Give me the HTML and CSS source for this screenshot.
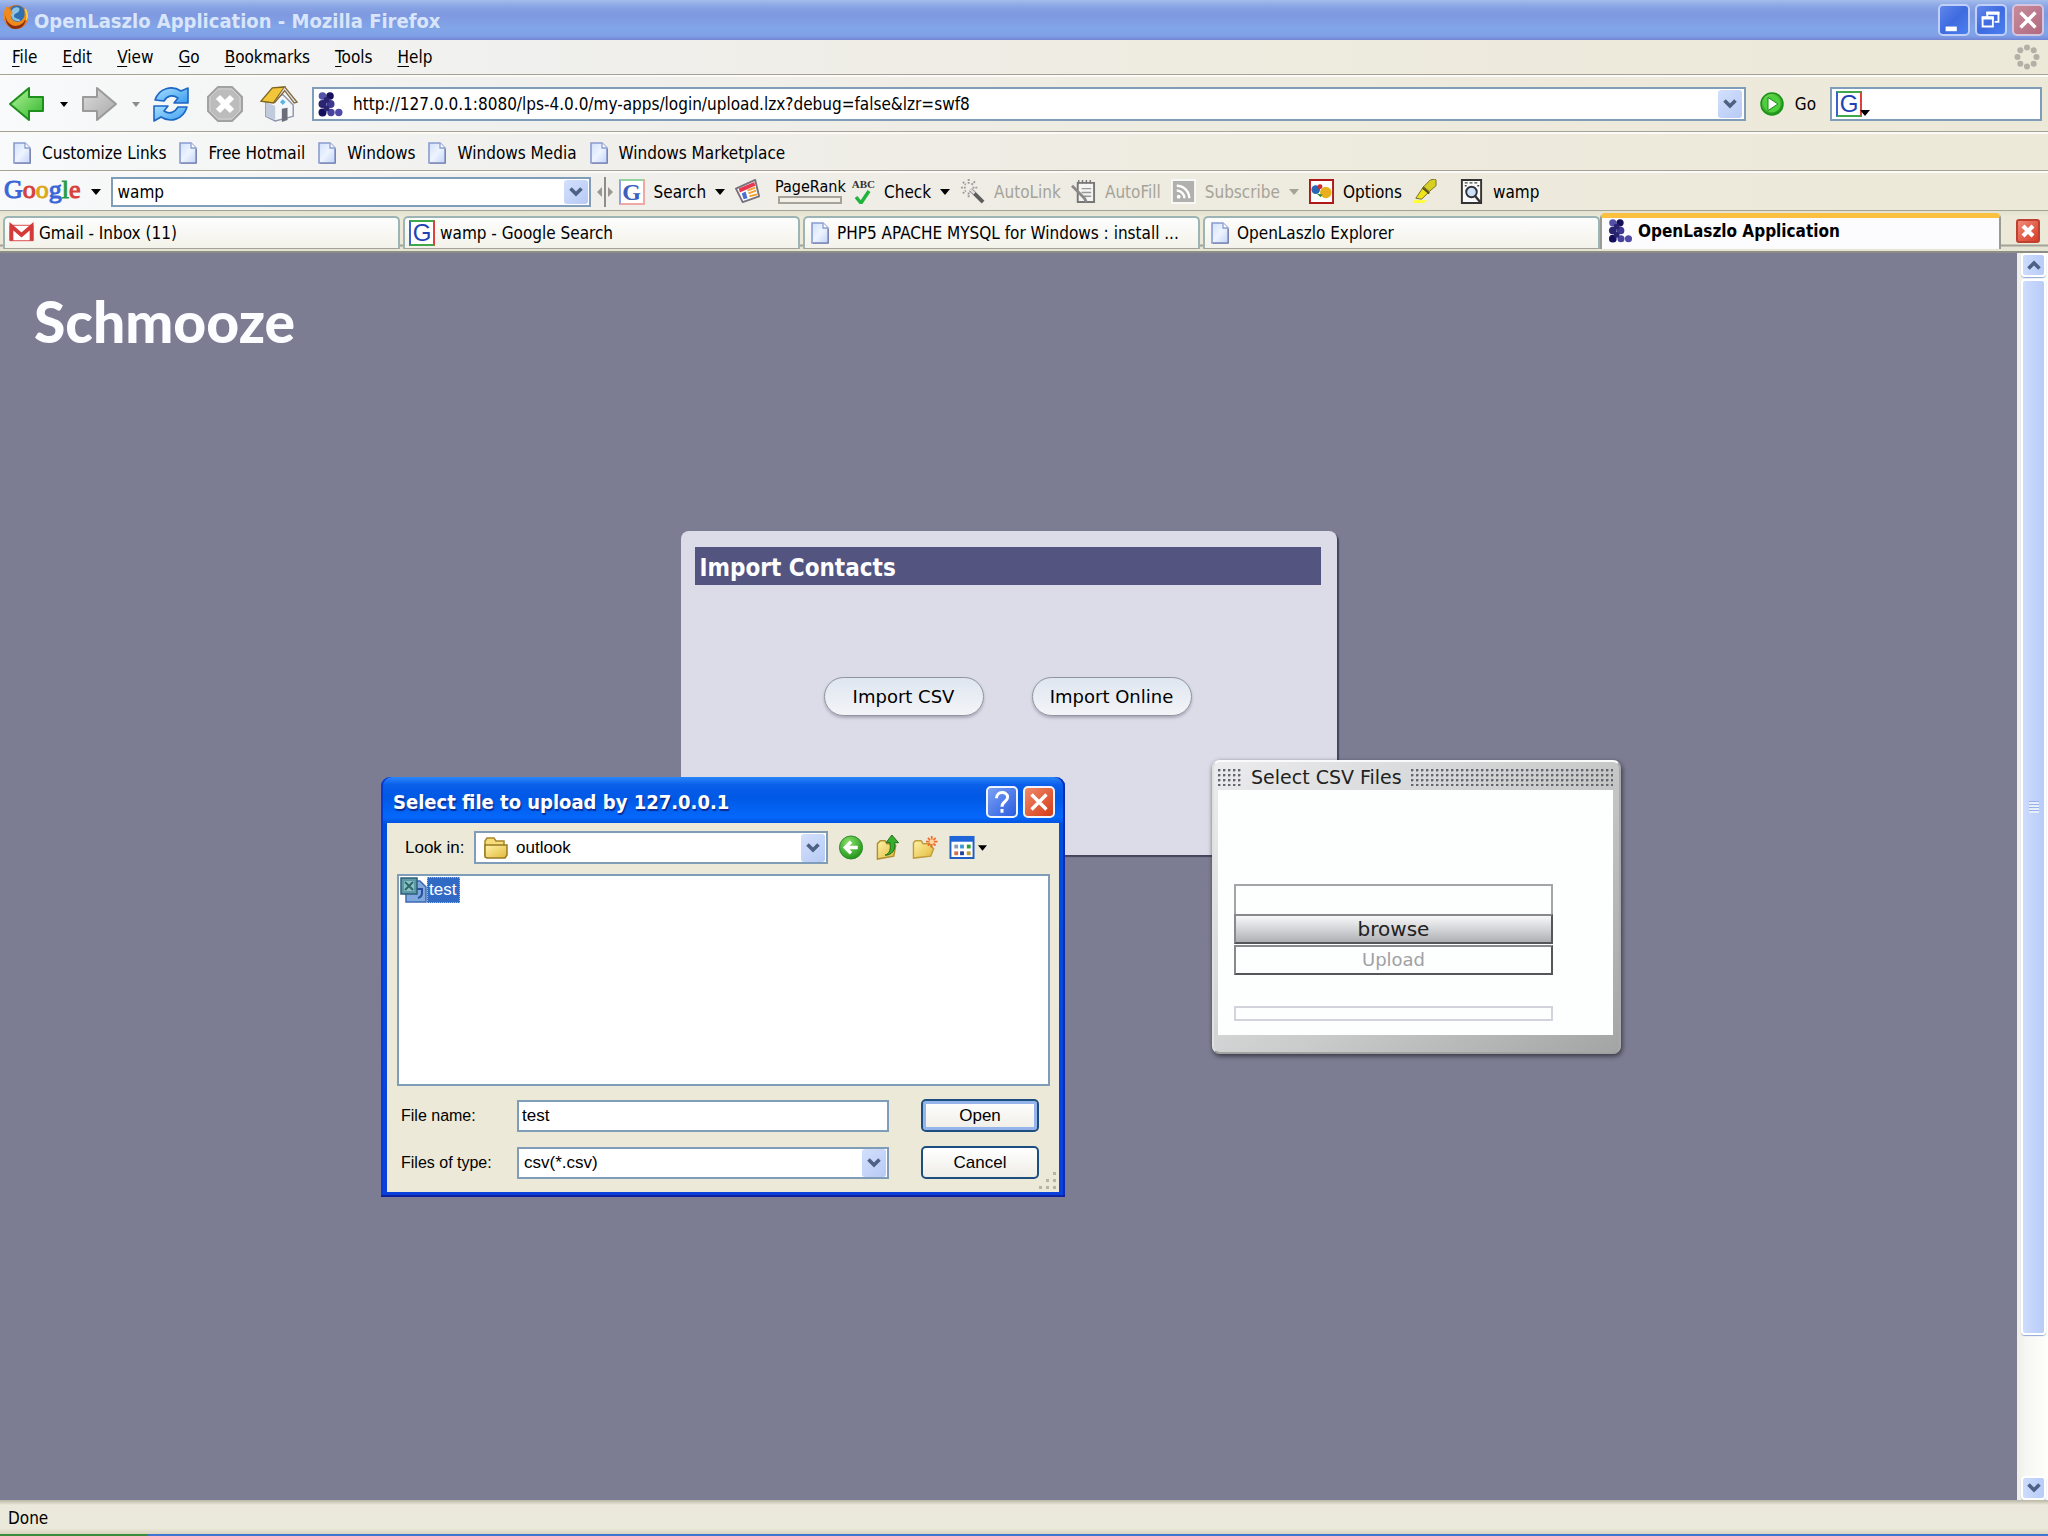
FILE: index.html
```html
<!DOCTYPE html>
<html lang="en">
<head>
<meta charset="utf-8">
<title>OpenLaszlo Application - Mozilla Firefox</title>
<link rel="stylesheet" href="styles.css">
</head>
<body>
<svg class="defs" aria-hidden="true">
  <defs>
    <linearGradient id="green" x1="0" y1="0" x2="1" y2="1"><stop offset="0" stop-color="#b6f59c"/><stop offset="1" stop-color="#2fb52a"/></linearGradient>
    <linearGradient id="grey" x1="0" y1="0" x2="1" y2="1"><stop offset="0" stop-color="#dcdcdc"/><stop offset="1" stop-color="#a8a8a8"/></linearGradient>
    <linearGradient id="sky" x1="0" y1="0" x2="1" y2="1"><stop offset="0" stop-color="#a8e0ff"/><stop offset="1" stop-color="#3b9bf0"/></linearGradient>
    <linearGradient id="paper" x1="0" y1="0" x2="1" y2="1"><stop offset="0" stop-color="#cfe0fb"/><stop offset=".5" stop-color="#eef4ff"/><stop offset="1" stop-color="#c4d4f6"/></linearGradient>
    <linearGradient id="gold" x1="0" y1="0" x2="1" y2="1"><stop offset="0" stop-color="#fff3a8"/><stop offset="1" stop-color="#e2b93a"/></linearGradient>
    <radialGradient id="ball" cx=".4" cy=".3" r=".8"><stop offset="0" stop-color="#8be36c"/><stop offset="1" stop-color="#128a10"/></radialGradient>
  </defs>
  <symbol id="i-page" viewBox="0 0 18 22"><path d="M1 1h11l5 5v15H1z" fill="url(#paper)" stroke="#8a9cd0" stroke-width="1.6"/><path d="M12 1v5h5" fill="#fff" stroke="#8a9cd0" stroke-width="1.3"/><path d="M2 21.2h15.400V7" fill="none" stroke="#7780aa"/></symbol>
  <symbol id="i-laszlo" viewBox="0 0 25 25"><g fill="#2a2470"><circle cx="4.500" cy="4" r="3.800" fill="#5450a8"/><circle cx="12" cy="4" r="3.800" fill="#17105e"/><circle cx="4.500" cy="12" r="4"/><circle cx="12.500" cy="12" r="4" fill="#3c3790"/><circle cx="4.500" cy="20.500" r="4" fill="#150e5a"/><circle cx="13" cy="20.500" r="3.700" fill="#4742a0"/><circle cx="20.800" cy="20.500" r="3.700" fill="#4f4aa6"/><circle cx="8.500" cy="8" r="3"/><circle cx="8.500" cy="16.500" r="3"/></g></symbol>
  <symbol id="i-chev" viewBox="0 0 14 10"><path d="M1.500 1.500L7 7l5.500-5.500" fill="none" stroke="#4d6185" stroke-width="3.600"/></symbol>
  <symbol id="i-caret" viewBox="0 0 10 6"><path d="M0 0h10L5 6z" fill="currentColor"/></symbol>
</svg>

<header class="chrome">
  <div class="titlebar">
    <svg class="fox" viewBox="0 0 26 26"><circle cx="13" cy="13" r="12" fill="#e0701a"/><circle cx="14" cy="10" r="8.500" fill="#2f6fb0"/><path d="M11 4c3-2 7 0 5 3s-5 2-5 5 5 2 6 4-6 2-8-2-1-8 2-10z" fill="#8cc4e6"/><path d="M1 8C2 4 3 3 5 2c0 2 1 3 3 3-1 2 1 3 2 4-2 1-3 3-1 6s7 4 10 1 3-6 2-10c3 3 4 8 2 12-3 6-11 8-16 5S0 14 1 8z" fill="#ee8a1e"/><path d="M3 10c-1 6 3 11 9 12 6 0 10-4 11-9 0 8-5 12-11 12S1 18 3 10z" fill="#8c2c10"/><path d="M22 5c2 3 3 7 1 11" stroke="#ffd23c" stroke-width="1.800" fill="none"/></svg>
    <span class="titletext">OpenLaszlo Application - Mozilla Firefox</span>
    <div class="winbtns">
      <button class="winbtn" aria-label="Minimize"><svg viewBox="0 0 30 30"><path d="M6 22h12v5H6z" fill="#fff"/></svg></button>
      <button class="winbtn" aria-label="Restore"><svg viewBox="0 0 30 30"><path d="M11 11V7h12v10h-4M6 12h11v10H6z" fill="none" stroke="#fff" stroke-width="2"/><path d="M10 8h14M5 13h13" stroke="#fff" stroke-width="3"/></svg></button>
      <button class="winbtn winclose" aria-label="Close"><svg viewBox="0 0 30 30"><path d="M7 7l16 16M23 7L7 23" stroke="#fff" stroke-width="3.600"/></svg></button>
    </div>
  </div>

  <nav class="menubar">
    <a href="#"><u>F</u>ile</a><a href="#"><u>E</u>dit</a><a href="#"><u>V</u>iew</a><a href="#"><u>G</u>o</a><a href="#"><u>B</u>ookmarks</a><a href="#"><u>T</u>ools</a><a href="#"><u>H</u>elp</a>
    <svg class="throb" viewBox="0 0 26 26" fill="#b3b0a7"><circle cx="13" cy="3.500" r="3"/><circle cx="19.700" cy="6.300" r="3"/><circle cx="22.500" cy="13" r="3"/><circle cx="19.700" cy="19.700" r="3"/><circle cx="13" cy="22.500" r="3"/><circle cx="6.300" cy="19.700" r="3"/><circle cx="3.500" cy="13" r="3"/><circle cx="6.300" cy="6.300" r="3"/></svg>
  </nav>

  <div class="navbar">
    <button class="nav" aria-label="Back"><svg viewBox="0 0 38 36"><path d="M2 18L21 2v9h14v14H21v9z" fill="url(#green)" stroke="#1f8f1c" stroke-width="2" stroke-linejoin="round"/></svg></button>
    <svg class="caret"><use href="#i-caret"/></svg>
    <button class="nav" aria-label="Forward"><svg viewBox="0 0 38 36"><path d="M36 18L17 2v9H3v14h14v9z" fill="url(#grey)" stroke="#9a9a9a" stroke-width="2" stroke-linejoin="round"/></svg></button>
    <svg class="caret dim"><use href="#i-caret"/></svg>
    <button class="nav" aria-label="Reload"><svg viewBox="0 0 38 36"><g fill="url(#sky)" stroke="#1c66c4" stroke-width="1.600" stroke-linejoin="round"><path d="M3 14C7 2 20-1 29 5l7-3v15H22l4-5c-6-4-11-2-14 3z"/><path d="M35 21C31 34 18 37 9 31l-7 4V20h14l-4 5c6 4 11 1 14-4z"/></g></svg></button>
    <button class="nav" aria-label="Stop"><svg viewBox="0 0 38 36"><path d="M12 1h14l10 10v14L26 35H12L2 25V11z" fill="#bcbcbc" stroke="#a2a2a2" stroke-width="2"/><path d="M12 3h14l8 8v14l-8 8H12l-8-8V11z" fill="none" stroke="#d2d2d2"/><path d="M12 11l14 14M26 11L12 25" stroke="#fff" stroke-width="6"/></svg></button>
    <button class="nav" aria-label="Home"><svg viewBox="0 0 40 38"><path d="M6 17L24 9l11 11v12l-19 5-10-5z" fill="#f4f6fa" stroke="#8a93a8" stroke-width="1.500"/><path d="M6 17l10 4v15L6 32z" fill="#c2cbdc"/><path d="M23 24l6-1v13l-6 2z" fill="#6b6d78"/><path d="M24 14l3 3-3 3-3-3z" fill="#56b6e8"/><path d="M1 16L13 2l13-1-12 17z" fill="#f3c63a" stroke="#7d651c" stroke-width="1.500"/><path d="M26 1l13 16-3 1L26 5l-11 13" fill="#d8dce6" stroke="#80643a" stroke-width="1.300"/></svg></button>
    <div class="field url">
      <svg class="ic"><use href="#i-laszlo"/></svg>
      <input type="text" aria-label="Address" value="http://127.0.0.1:8080/lps-4.0.0/my-apps/login/upload.lzx?debug=false&amp;lzr=swf8">
      <button class="drop" aria-label="Show history"><svg><use href="#i-chev"/></svg></button>
    </div>
    <button class="go"><svg viewBox="0 0 24 24"><circle cx="12" cy="12" r="11" fill="url(#ball)" stroke="#169414" stroke-width="1.500"/><circle cx="12" cy="12" r="8.500" fill="#4ecf3c"/><path d="M8 5.500L18 12 8 18.500z" fill="#fff" stroke="#1a8a18"/></svg>Go</button>
    <div class="field find">
      <span class="g">G</span><svg class="caret"><use href="#i-caret"/></svg>
      <input type="text" aria-label="Search the web">
    </div>
  </div>

  <nav class="bookmarks">
    <a href="#"><svg><use href="#i-page"/></svg>Customize Links</a>
    <a href="#"><svg><use href="#i-page"/></svg>Free Hotmail</a>
    <a href="#"><svg><use href="#i-page"/></svg>Windows</a>
    <a href="#"><svg><use href="#i-page"/></svg>Windows Media</a>
    <a href="#"><svg><use href="#i-page"/></svg>Windows Marketplace</a>
  </nav>

  <div class="gbar">
    <button class="glogo"><span class="gb">G</span><span class="gr">o</span><span class="gy">o</span><span class="gb">g</span><span class="gg">l</span><span class="gr">e</span></button>
    <svg class="caret"><use href="#i-caret"/></svg>
    <div class="field gq">
      <input type="text" aria-label="Google search" value="wamp">
      <button class="drop" aria-label="Past searches"><svg><use href="#i-chev"/></svg></button>
    </div>
    <svg class="split" viewBox="0 0 16 30"><path d="M8 0v30" stroke="#8f8d86" stroke-width="2"/><path d="M0 15l5-5v10zM16 15l-5-5v10z" fill="#9a9890"/></svg>
    <button class="tool"><span class="g faint">G</span>Search<svg class="caret"><use href="#i-caret"/></svg></button>
    <button class="tool" aria-label="News"><svg class="ic" viewBox="0 0 26 26"><path d="M1 10L21 1l4 17L8 24z" fill="#fff" stroke="#77727c" stroke-width="2" stroke-linejoin="round"/><path d="M4 10l16-7 1 4L5 14z" fill="#e8384f"/><path d="M7 15l4-2 2 7-4 1z" fill="#4a6fd0"/><path d="M13 12l8-3M14 15l8-3M15 18l8-2" stroke="#f0a030" stroke-width="2"/></svg></button>
    <div class="rank"><span>PageRank</span><i></i></div>
    <button class="tool check"><span class="abc">ABC<svg viewBox="0 0 16 14"><path d="M1 7l5 6 8-12" fill="none" stroke="#1fb43c" stroke-width="3.500"/></svg></span>Check<svg class="caret"><use href="#i-caret"/></svg></button>
    <button class="tool off"><svg class="ic" viewBox="0 0 26 26"><path d="M11 11l13 13" stroke="#5d5d5d" stroke-width="4"/><path d="M11 11l4 4" stroke="#ddd" stroke-width="3"/><path d="M9 0v6M9 14v5M1 9h5M13 9h5M3 3l3 3M12 6l4-4M3 15l3-3" stroke="#9c9c9c" stroke-width="2" stroke-dasharray="2 1"/></svg>AutoLink</button>
    <button class="tool off"><svg class="ic" viewBox="0 0 26 26"><path d="M7 4h17v20H7z" fill="#f4f4f2" stroke="#777" stroke-width="2"/><path d="M8 1v4M12 1v4M16 1v4M20 1v4" stroke="#777" stroke-width="1.500"/><path d="M11 10h10M11 14h10M13 18h8" stroke="#999" stroke-width="1.500"/><path d="M1 7l13 13 2 4" stroke="#8a8a8a" stroke-width="3" fill="none"/></svg>AutoFill</button>
    <button class="tool off"><svg class="ic" viewBox="0 0 26 26"><path d="M1 1h24v24H1z" fill="#b0b0ae" stroke="#f8f8f6" stroke-width="2"/><g fill="none" stroke="#fff" stroke-width="2.500"><path d="M6 12a8 8 0 0 1 8 8M6 7a13 13 0 0 1 13 13"/></g><circle cx="8" cy="18.500" r="2" fill="#fff"/></svg>Subscribe<svg class="caret"><use href="#i-caret"/></svg></button>
    <button class="tool"><svg class="ic" viewBox="0 0 26 26"><path d="M1 1h24v24H1z" fill="#fff" stroke="#b01818" stroke-width="2"/><circle cx="7" cy="11" r="4.500" fill="#2a66b4"/><circle cx="11.500" cy="8" r="2.500" fill="#d02a2a"/><circle cx="17.500" cy="14" r="6" fill="#e8b020"/><path d="M8 15l6 1-2 3z" fill="#2c8c3c"/></svg>Options</button>
    <button class="tool" aria-label="Highlight"><svg class="ic" viewBox="0 0 26 26"><path d="M1 22h15l-4 3H1z" fill="#ffff2c"/><path d="M4 20l8-12 6 5-8 8z" fill="#f0e418" stroke="#6f6a20"/><path d="M12 8l7-7 5-1 1 1v6l-7 6z" fill="#d8d020" stroke="#77702a"/><path d="M11 9l7 6" stroke="#55501c" stroke-width="2"/></svg></button>
    <button class="tool word"><svg class="ic" viewBox="0 0 26 26"><path d="M3 1h20v24H3z" fill="#fafafa" stroke="#333" stroke-width="2"/><path d="M6 4h3M11 4h3M16 4h3M6 7h2M19 7h2" stroke="#444" stroke-width="1.500"/><circle cx="13" cy="13.500" r="5.500" fill="#cfe0fa" stroke="#333" stroke-width="2"/><path d="M17 18l5 6" stroke="#333" stroke-width="2.500"/></svg>wamp</button>
  </div>

  <nav class="tabs">
    <a class="tab" href="#"><svg class="ic" viewBox="0 0 26 18"><path d="M1 1h24v16H1z" fill="#fff" stroke="#d84a4a"/><path d="M2.500 17V2l10.500 9L23.500 2v15" fill="none" stroke="#d53a3a" stroke-width="4"/></svg>Gmail - Inbox (11)</a>
    <a class="tab" href="#"><span class="g">G</span>wamp - Google Search</a>
    <a class="tab" href="#"><svg class="pg"><use href="#i-page"/></svg>PHP5 APACHE MYSQL for Windows : install ...</a>
    <a class="tab" href="#"><svg class="pg"><use href="#i-page"/></svg>OpenLaszlo Explorer</a>
    <a class="tab active" href="#"><svg class="ic"><use href="#i-laszlo"/></svg>OpenLaszlo Application</a>
    <button class="tabclose" aria-label="Close tab"><svg viewBox="0 0 24 24"><path d="M6 6l12 12M18 6L6 18" stroke="#fff" stroke-width="5"/></svg></button>
  </nav>
</header>

<div class="view">
  <main class="page">
    <h1>Schmooze</h1>
    <section class="panel">
      <h2>Import Contacts</h2>
      <div class="choices"><button>Import CSV</button><button>Import Online</button></div>
    </section>

    <section class="csv">
      <header><i class="dots lead"></i><span>Select CSV Files</span><i class="dots"></i></header>
      <div class="csvbody">
        <input type="text" aria-label="File path">
        <button class="browse">browse</button>
        <button class="upload" disabled>Upload</button>
        <div class="progress"></div>
      </div>
    </section>

    <section class="dialog" role="dialog" aria-label="Select file to upload">
      <header>
        <span>Select file to upload by 127.0.0.1</span>
        <button class="winbtn help" aria-label="Help"><svg viewBox="0 0 30 30"><path d="M9 11c0-8 12-8 12-1 0 5-6 4-6 10M15 22.500v4" fill="none" stroke="#fff" stroke-width="3.200"/></svg></button>
        <button class="winbtn red" aria-label="Close"><svg viewBox="0 0 30 30"><path d="M7 7l16 16M23 7L7 23" stroke="#fff" stroke-width="3.600"/></svg></button>
      </header>
      <div class="dbody">
        <div class="look">
          <label for="lookin">Look in:</label>
          <div class="field combo">
            <svg class="folder" viewBox="0 0 26 22"><path d="M2 19V4l2-3h7l2 3h8v4" fill="#f6dc78" stroke="#a8862a" stroke-width="1.500"/><path d="M2 20V8h22v10l-2 3H4z" fill="url(#gold)" stroke="#9a7a20" stroke-width="1.500"/></svg>
            <select id="lookin"><option>outlook</option></select>
            <span class="drop"><svg><use href="#i-chev"/></svg></span>
          </div>
          <div class="dtools">
            <button aria-label="Back"><svg viewBox="0 0 26 26"><circle cx="13" cy="13" r="12" fill="url(#ball)" stroke="#2e8b2a"/><path d="M20 13H8M13 7l-6 6 6 6" fill="none" stroke="#fff" stroke-width="3.500"/></svg></button>
            <button aria-label="Up one level"><svg viewBox="0 0 26 26"><path d="M2 25V9l3-3h5l2 3h7l2 2-2 11z" fill="url(#gold)" stroke="#b08f30" stroke-width="1.500"/><path d="M10 21c5-2 6-6 5-13h-4l6-8 7 8h-4c1 8-3 13-10 13z" fill="#36b02c" stroke="#1b6e18"/></svg></button>
            <button aria-label="New folder"><svg viewBox="0 0 26 26"><path d="M1 24V8l2-2h6l2 3h8v3l3 2-3 8z" fill="url(#gold)" stroke="#c09c3c" stroke-width="1.500"/><path d="M20 1v12M14 7h12M16 3l8 8M24 3l-8 8" stroke="#f06a28" stroke-width="1.800"/><circle cx="20" cy="7" r="2.500" fill="#ffd9a0"/></svg></button>
            <button aria-label="Views"><svg viewBox="0 0 26 26"><path d="M1 2h24v22H1z" fill="#fff" stroke="#1f5fc4" stroke-width="2"/><path d="M1 1h24v6H1z" fill="#1f66d8"/><path d="M5 10h4v4H5z" fill="#8a9ab8"/><path d="M11 10h4v4h-4z" fill="#3a9ad8"/><path d="M18 10h4v4h-4z" fill="#2ca040"/><path d="M5 17h4v4H5z" fill="#d86a4a"/><path d="M11 17h4v4h-4z" fill="#1f3f9a"/><path d="M18 17h4v4h-4z" fill="#c89a30"/></svg><svg class="caret"><use href="#i-caret"/></svg></button>
          </div>
        </div>
        <div class="files"><div class="file"><svg viewBox="0 0 27 26"><path d="M6 4h14l6 6v15H6z" fill="#7fa8dc" stroke="#3d68b4" stroke-width="1.500"/><path d="M1 1h16v16H1z" fill="#5c98a8" stroke="#2c5f78" stroke-width="1.500"/><path d="M4 4h10v10H4z" fill="#8fc0c4"/><path d="M5 5l8 8M13 5l-8 8" stroke="#2a6a68" stroke-width="2"/><path d="M17 12h5v4c0 3-1 4-4 5" fill="none" stroke="#2850a0" stroke-width="2"/></svg><span>test</span></div></div>
        <div class="form">
          <label for="fname">File name:</label>
          <div class="field"><input id="fname" type="text" value="test"></div>
          <button class="xp primary">Open</button>
          <label for="ftype">Files of type:</label>
          <div class="field combo"><select id="ftype"><option>csv(*.csv)</option></select><span class="drop"><svg><use href="#i-chev"/></svg></span></div>
          <button class="xp">Cancel</button>
        </div>
        <svg class="grip" viewBox="0 0 18 18" fill="#b8b4a2"><path d="M14 0h3v3h-3zM14 7h3v3h-3zM7 7h3v3H7zM14 14h3v3h-3zM7 14h3v3H7zM0 14h3v3H0z"/></svg>
      </div>
    </section>
  </main>
  <div class="scroll" aria-hidden="true">
    <span class="sbtn"><svg class="up"><use href="#i-chev"/></svg></span>
    <span class="thumb"><i></i></span>
    <span class="sbtn last"><svg><use href="#i-chev"/></svg></span>
  </div>
</div>
<footer class="status">Done</footer>
<div class="taskbar"><i></i></div>
</body>
</html>
```
FILE: styles.css
```css
* { box-sizing: border-box; }
body {
  margin: 0; height: 100vh; display: flex; flex-direction: column; overflow: hidden;
  font: 17px/20px "DejaVu Sans Condensed", "DejaVu Sans", sans-serif; color: #000; background: #ece9d8;
}
button, input, select { font: inherit; color: inherit; margin: 0; padding: 0; border: 0; background: none; }
input, select { outline: 0; appearance: none; min-width: 0; flex: 1; width: 100%; height: 100%; }
a { color: inherit; text-decoration: none; }
svg { display: block; flex: none; }
.defs { position: absolute; width: 0; height: 0; }
.caret { width: 10px; height: 6px; }
.ic { width: 25px; height: 25px; }
.pg, .bookmarks svg { width: 18px; height: 22px; }

.chrome { background: linear-gradient(to right, #f8fafb 0, #f0f0ee 500px, #eeebe0 1200px, #ece9d8 100%); }
.titlebar {
  height: 40px; display: flex; align-items: center; gap: 5px; padding: 0 4px 0 3px;
  background: linear-gradient(#a5bdec 0, #8aa6e4 6px, #7f98e0 14px, #81a6e8 30px, #7f9fe6 36px, #7384d4 100%);
}
.fox { width: 26px; height: 26px; align-self: flex-start; margin-top: 4px; }
.titletext { padding-top: 2px; font-size: 20px; font-weight: bold; color: #d8e5fa; }
.winbtns { margin-left: auto; display: flex; gap: 5px; }
.winbtn { width: 32px; height: 32px; border: 2px solid #c0d0f8; border-radius: 5px; background: linear-gradient(135deg, #5f86ea, #3f6be0 50%, #4a80ee); }
.winbtn svg { width: 28px; height: 28px; }
.winclose { background: linear-gradient(135deg, #c88b9c, #b06a80); border-color: #d4c4e0; }

.menubar { height: 35px; display: flex; align-items: center; gap: 25px; padding: 0 8px 0 12px; border-bottom: 1px solid #a5a298; }
.menubar u { text-underline-offset: 3px; }
.throb { width: 26px; height: 26px; margin-left: auto; }

.navbar { height: 57px; display: flex; align-items: center; padding: 0 6px 0 8px; border-top: 2px solid #fbfaf6; border-bottom: 1px solid #a5a298; }
.nav { width: 38px; margin-right: 14px; }
.nav svg { width: 38px; height: 36px; }
.nav + .caret { margin-right: 12px; width: 8px; height: 5px; }
.nav + .nav { margin-left: 2px; }
.dim { color: #8c8c88; }
.field { display: flex; align-items: center; background: #fff; border: 2px solid #7f9db9; }
.url { flex: 1; height: 34px; padding: 0 2px 0 4px; gap: 10px; }
.drop { width: 24px; height: 28px; border-radius: 3px; background: linear-gradient(135deg, #d3e0fd, #b7caf5); display: flex; align-items: center; justify-content: center; flex: none; }
.drop svg { width: 14px; height: 10px; }
.go { display: flex; align-items: center; gap: 11px; margin: 0 14px; }
.go svg { width: 24px; height: 24px; }
.find { width: 212px; height: 34px; padding-left: 4px; }
.find .caret { align-self: flex-end; margin: 0 0 3px -2px; }
.g { width: 26px; height: 26px; flex: none; border: 2px solid; border-color: #3fa84a #e0403a #3fa84a #3a62d0; background: #fff; color: #1c42b4; font: 24px/22px "Liberation Sans", sans-serif; text-align: center; }
.faint { border-color: #98d4a0 #f0a8a4 #f0a8a4 #8aa4e8; font-family: "Liberation Serif", serif; font-weight: bold; color: #3a60bc; }

.bookmarks { height: 39px; display: flex; align-items: center; gap: 13px; padding: 2px 13px 0; border-top: 2px solid #fbfaf6; border-bottom: 1px solid #a5a298; }
.bookmarks a { display: flex; align-items: center; gap: 11px; }

.gbar { height: 40px; display: flex; align-items: center; gap: 10px; padding: 0 4px; border-top: 2px solid #fbfaf6; border-bottom: 1px solid #a5a298; }
.glogo { font: 26px/30px "Liberation Serif", serif; padding-bottom: 4px; -webkit-text-stroke: 1px; }
.gb { color: #3a66d8; } .gr { color: #d8403c; } .gy { color: #dca81c; } .gg { color: #2c9c44; }
.gq { width: 480px; height: 30px; padding: 0 1px 0 5px; }
.gq .drop { height: 24px; }
.split { width: 16px; height: 30px; margin: 0 -4px; }
.tool { display: flex; align-items: center; gap: 9px; }
.off { color: #a5a399; }
.rank { display: flex; flex-direction: column; align-items: center; margin: 0 -4px 0 5px; font-size: 16px; line-height: 14px; gap: 2px; }
.rank i { width: 64px; height: 8px; border: 2px solid #a5a39a; background: #f2f0e6; }
.abc { display: flex; flex-direction: column; align-items: center; font: bold 11px/11px "Liberation Serif", serif; color: #333; }
.abc svg { width: 16px; height: 14px; }
.word { margin-left: 12px; }

.tabs { height: 42px; display: flex; gap: 3px; padding: 2px 8px 0 3px; border-bottom: 2px solid #8e8d86; background: linear-gradient(#e3e1cf, #ece9d8 6px, #ece9d8 33px, #a5a298 34px, #a5a298 35px, #e6e4d2 36px); }
.tab { flex: 1; min-width: 0; height: 33px; margin-top: 3px; display: flex; align-items: center; gap: 5px; padding: 0 4px; border: 2px solid #9db4b4; border-bottom: 1px solid #a5a298; border-radius: 5px 5px 0 0; background: linear-gradient(#fdfdfd, #f3f2ea); white-space: nowrap; }
.tab .ic { height: 24px; }
.tab .pg { margin: 0 3px 0 2px; }
.active { margin: 0; height: 36px; background: #fcfcfe; font-weight: bold; border-color: #9a9a94; border-top: 5px solid #fcc040; border-bottom: 0; padding: 0 6px 6px; margin-left: -3px; }
.tabclose { width: 24px; height: 24px; margin: 6px 0 0 12px; border: 2px solid #c04030; border-radius: 3px; background: linear-gradient(135deg, #f08a78, #d83c28); }
.tabclose svg { width: 20px; height: 20px; }

.view { flex: 1; min-height: 0; display: flex; }
.page { flex: 1; position: relative; background: #7c7d92; overflow: hidden; }
h1 { margin: 0; padding: 34px 34px 0; font: 900 57px/68px Lato, sans-serif; color: #fbfdff; }
.panel { width: 656px; height: 324px; margin: 176px auto 0; padding: 16px 16px 0 14px; border-radius: 8px 8px 0 0; background: #dcdce8; box-shadow: 2px 2px 1px #44445c; }
h2 { margin: 0; height: 38px; padding-left: 5px; background: #53547f; color: #fff; font: bold 24px/42px "DejaVu Sans Condensed", sans-serif; }
.choices { display: flex; justify-content: center; gap: 48px; margin-top: 92px; }
.choices button { width: 160px; height: 39px; border: 1px solid #8f949f; border-radius: 20px; background: linear-gradient(#dfe6f0, #f3f4f8); box-shadow: 0 2px 3px #a8a8b8; font: 18px "DejaVu Sans", sans-serif; }

.csv { position: absolute; left: 1212px; top: 507px; width: 409px; height: 294px; padding: 0 6px 0 4px; border: 2px solid; border-color: #fafafa #a8aaaa #a0a2a2 #dfe2df; border-radius: 8px; background: linear-gradient(135deg, #ececee, #c9cbcb 55%, #a3a5a5); box-shadow: 1px 2px 5px #33343f; font-family: "DejaVu Sans", sans-serif; display: flex; flex-direction: column; }
.csv header { height: 28px; display: flex; align-items: center; gap: 9px; padding-top: 2px; font-size: 19px; color: #222; }
.dots { flex: 1; height: 17px; background: radial-gradient(circle at 1px 1px, #66676e 1px, transparent 2px) 0 0 / 5px 5px; }
.lead { flex: none; width: 24px; }
.csvbody { height: 245px; padding: 94px 60px 0 16px; background: #fdfefe; display: flex; flex-direction: column; }
.csvbody input { flex: none; height: 30px; border: 2px solid #a4a5a8; border-bottom: 0; }
.csvbody button { height: 30px; border: 2px solid; border-color: #88898c #55565a #55565a #88898c; }
.browse { font-size: 20px; line-height: 24px; color: #222; background: linear-gradient(#f8f8fa, #d4d5d8 50%, #aeb0b4); }
.csvbody .upload { margin-top: 1px; font-size: 18px; color: #a0a1a4; }
.progress { height: 15px; margin-top: 31px; border: 2px solid #d2d3dc; }

.dialog { position: absolute; left: 381px; top: 524px; width: 684px; height: 420px; padding: 0 6px 5px; border-radius: 9px 9px 0 0; background: linear-gradient(#2a86f8, #0a5eea 8px, #0058e4 20px, #0468fc 40px, #0150dc 47px, #0b40dc 100%); box-shadow: inset 0 -2px #0a22a0, inset -2px 0 #0a2ab8, inset 2px 0 #0a3ad0; display: flex; flex-direction: column; font: 17px/20px "Liberation Sans", sans-serif; }
.dialog header { height: 46px; display: flex; align-items: center; gap: 5px; padding: 4px 4px 0 6px; color: #fff; font: bold 20px/22px "DejaVu Sans Condensed", sans-serif; text-shadow: 1px 2px 1px #0a2a90; }
.dialog header span { margin-right: auto; }
.dialog .winbtn { border-color: #f0f4ff; }
.help { background: linear-gradient(135deg, #7ba0f4, #2a5ce0); }
.red { background: linear-gradient(135deg, #f08a68, #d43c18); }
.dbody { flex: 1; position: relative; padding: 8px 9px 0 10px; background: #ece9d8; }
.look { display: flex; align-items: center; height: 33px; margin-left: 8px; }
.look label { width: 69px; }
.look .combo { width: 354px; height: 33px; padding-left: 7px; }
.combo { padding: 0 1px 0 5px; }
.combo .drop { pointer-events: none; }
.folder { width: 26px; height: 22px; margin-right: 7px; }
.dtools { display: flex; gap: 11px; margin-left: 10px; }
.dtools button { display: flex; align-items: center; gap: 3px; }
.dtools svg { width: 26px; height: 25px; }
.dtools .caret { width: 9px; height: 6px; }
.files { height: 212px; margin-top: 10px; border: 2px solid #7f9db9; background: #fff; padding: 1px; }
.file { display: flex; align-items: center; }
.file svg { width: 27px; height: 26px; }
.file span { height: 26px; line-height: 24px; padding: 0 3px 0 1px; color: #fff; background: #316ac5; border: 1px dotted #d8b060; }
.form { display: grid; grid-template-columns: 116px 372px 118px; row-gap: 14px; align-items: center; margin: 13px 0 0 4px; }
.form label { font-size: 16px; }
.form .field { height: 32px; }
.form input { padding-left: 3px; }
.xp { width: 118px; height: 33px; margin-left: 32px; border: 2px solid #1c4f80; border-radius: 5px; background: linear-gradient(#fff, #eeede6); }
.primary { box-shadow: inset 0 0 0 3px #96b4ec; }
.grip { position: absolute; right: 2px; bottom: 2px; width: 18px; height: 18px; }

.scroll { width: 31px; padding: 0 2px 0 4px; background: linear-gradient(to right, #eeede5 0, #f6f6f2 8px, #fefefb); display: flex; flex-direction: column; gap: 2px; }
.sbtn, .thumb { display: flex; align-items: center; justify-content: center; border: 2px solid #fff; border-radius: 4px; background: linear-gradient(to right, #cddcfe, #b8ccf8); box-shadow: 0 1px 1px #8ea8d8; }
.sbtn { height: 24px; }
.sbtn svg { width: 14px; height: 10px; }
.sbtn .up { transform: rotate(180deg); }
.thumb { height: 1056px; }
.thumb i { width: 10px; height: 12px; background: repeating-linear-gradient(#98b0ec 0 1px, #e6eefc 1px 3px); }
.last { margin-top: auto; }

.status { height: 34px; padding: 8px; background: linear-gradient(#b8b6a4, #ece9dc 5px, #ebe9da 28px, #d8d4c0); }
.taskbar { height: 2px; background: #3f74d0; }
.taskbar i { display: block; width: 148px; height: 2px; background: #3c8a3c; }
```
